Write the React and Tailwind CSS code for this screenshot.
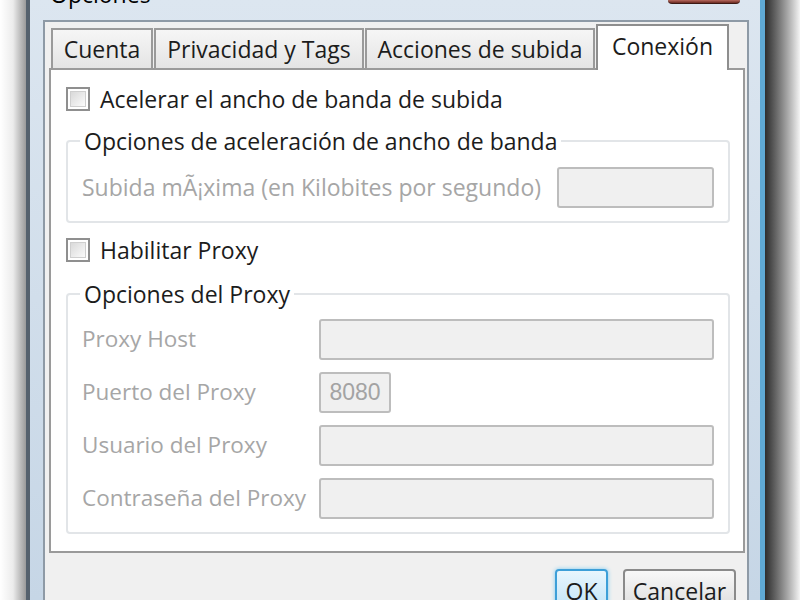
import React from 'react'

const tabs = [
  { label: 'Cuenta', w: 'w-[102px]' },
  { label: 'Privacidad y Tags', w: 'w-[210px]' },
  { label: 'Acciones de subida', w: 'w-[230px]' },
  { label: 'Conexión', w: 'w-[133px]', active: true },
]

const proxyRows = [
  { label: 'Proxy Host' },
  { label: 'Puerto del Proxy', value: '8080', short: true },
  { label: 'Usuario del Proxy' },
  { label: 'Contraseña del Proxy' },
]

function Checkbox({ label }) {
  return (
    <div className="flex items-center gap-[10px] h-[24px]">
      <span className="w-[24px] h-[24px] shrink-0 border-2 border-[#8f8f8f] bg-white p-[2px]">
        <span className="block w-full h-full border border-[#cfcfcf] bg-gradient-to-br from-[#d9d9d9] to-[#fbfbfb]" />
      </span>
      <span className="text-[23px] leading-none text-[#1c1c1c]">{label}</span>
    </div>
  )
}

function Field({ value, className }) {
  return (
    <div className={`h-[41px] border-2 border-[#bdbdbd] rounded-[3px] bg-[#f0f0f0] flex items-center px-[8px] text-[23px] text-[#a3a3a3] font-['Liberation_Sans',sans-serif] ${className || ''}`}>
      {value}
    </div>
  )
}

function Group({ title, children, className }) {
  return (
    <fieldset className={`border-2 border-[#e2e5e8] rounded-[4px] ${className || ''}`}>
      <legend className="ml-[12px] px-[4px] text-[23px] leading-[28px] text-[#1c1c1c]">{title}</legend>
      {children}
    </fieldset>
  )
}

export default function App() {
  return (
    <div className="w-[800px] h-[600px] overflow-hidden flex font-['Open_Sans',sans-serif]">
      <div className="w-[26px] shrink-0 bg-gradient-to-r from-white via-[#ececec] to-[#9a9a9a]" />

      <div className="w-[739px] shrink-0 flex flex-col border-l-[4px] border-r-[5px] border-l-[#55616d] border-r-[#5fa9d4] bg-gradient-to-b from-[#dce6f0] to-[#c6d6e6]">
        {/* title bar */}
        <div className="h-[20px] shrink-0 flex justify-between items-start pl-[20px] pr-[20px]">
          <span className="-mt-[20px] text-[23px] leading-[28px] text-black">Opciones</span>
          <div className="w-[72px] h-[4px] rounded-b-[4px] bg-gradient-to-b from-[#b86a5e] to-[#6b2a22] border-b border-[#3d1a14]" />
        </div>

        {/* client area */}
        <div className="flex-1 ml-[13px] mr-[11px] border-2 border-b-0 border-[#8e9aa6] bg-[#f0f0f0] flex flex-col pl-[4px] pr-[2px]">
          <div className="h-[46px] flex items-end gap-[1px] pl-[2px] pt-[2px]">
            {tabs.map(t =>
              t.active ? (
                <div key={t.label} className={`${t.w} h-[46px] -mb-[2px] relative z-10 bg-white border-2 border-b-0 border-[#8e8e8e] flex items-center justify-center pb-[4px] text-[23px] text-[#1c1c1c]`}>
                  {t.label}
                </div>
              ) : (
                <div key={t.label} className={`${t.w} h-[40px] bg-gradient-to-b from-[#f6f6f6] to-[#e4e4e4] border-2 border-b-0 border-[#9a9a9a] flex items-center justify-center text-[23px] text-[#1c1c1c]`}>
                  {t.label}
                </div>
              )
            )}
          </div>

          <div className="border-2 border-[#9a9a9a] bg-white pt-[17px] pl-[15px] pr-[13px] pb-[17px]">
            <Checkbox label="Acelerar el ancho de banda de subida" />

            <Group title="Opciones de aceleración de ancho de banda" className="mt-[16px]">
              <div className="flex items-center justify-between pl-[14px] pr-[14px] pt-[12px] pb-[13px]">
                <span className="text-[23px] leading-[28px] text-[#a6a6a6] -mt-[2px]">Subida mÃ¡xima (en Kilobites por segundo)</span>
                <Field className="w-[157px]" />
              </div>
            </Group>

            <div className="mt-[15px]">
              <Checkbox label="Habilitar Proxy" />
            </div>

            <Group title="Opciones del Proxy" className="mt-[18px]">
              <div className="grid grid-cols-[237px_1fr] gap-y-[12px] items-center pl-[14px] pr-[14px] pt-[11px] pb-[13px]">
                {proxyRows.map(r => (
                  <React.Fragment key={r.label}>
                    <span className="text-[22.5px] leading-[28px] text-[#a6a6a6] -mt-[1px]">{r.label}</span>
                    <Field value={r.value} className={r.short ? 'w-[72px] justify-center px-0' : ''} />
                  </React.Fragment>
                ))}
              </div>
            </Group>
          </div>

          <div className="flex justify-end gap-[15px] pr-[9px] mt-[16px]">
            <button className="w-[53px] h-[44px] rounded-[4px] border-2 border-[#3c9fd8] bg-gradient-to-b from-[#e8f6fd] to-[#bfe3f7] shadow-[0_0_4px_#7ccaf0] text-[23px] text-[#1c1c1c]">OK</button>
            <button className="w-[113px] h-[44px] rounded-[4px] border-2 border-[#8a8a8a] bg-gradient-to-b from-[#f8f8f8] to-[#dcdcdc] text-[23px] text-[#1c1c1c]">Cancelar</button>
          </div>
        </div>
      </div>

      <div className="flex-1 bg-gradient-to-r from-[#2e2e2e] via-[#8a8a8a] to-[#f4f4f4]" />
    </div>
  )
}
